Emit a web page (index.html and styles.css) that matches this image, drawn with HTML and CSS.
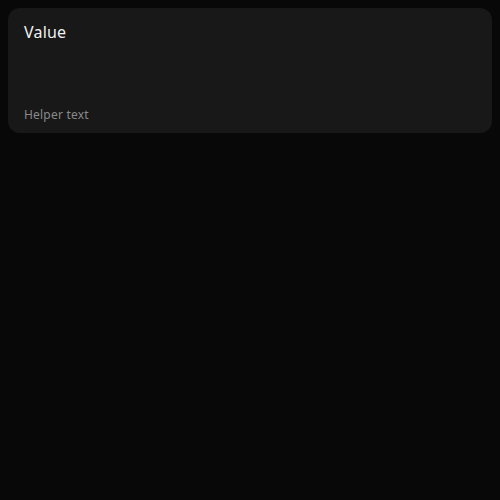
FILE: index.html
```html
<!DOCTYPE html>
<html>
<head>
<meta charset="utf-8">
<link rel="stylesheet" href="styles.css">
</head>
<body>
<div class="card">
  <div class="value">Value</div>
  <div class="helper">Helper text</div>
</div>
</body>
</html>
```
FILE: styles.css
```css
html, body {
  background: #080808;
}
body {
  margin: 8px;
  font-family: "Noto Sans", sans-serif;
}
.card {
  background: #181818;
  border-radius: 12px;
  padding: 12px 16px 9px;
  height: 104px;
  display: flex;
  flex-direction: column;
  justify-content: space-between;
}
.value {
  color: #f0f0f0;
  font-size: 16px;
  line-height: 24px;
  letter-spacing: 0.2px;
}
.helper {
  color: #8a8a8a;
  font-size: 12px;
  line-height: 18px;
  letter-spacing: 0.2px;
}
```
